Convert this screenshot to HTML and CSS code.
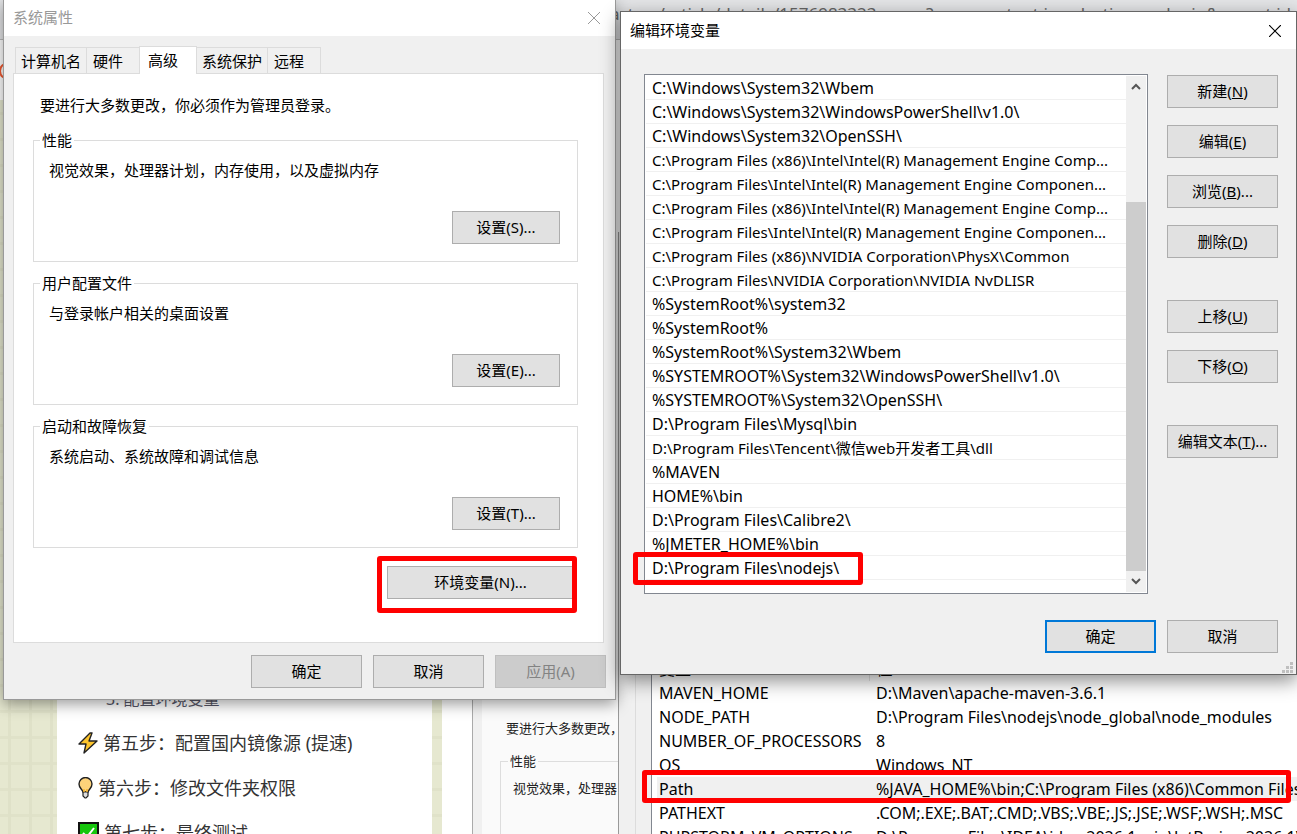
FILE: index.html
```html
<!DOCTYPE html>
<html lang="zh-CN">
<head>
<meta charset="UTF-8">
<meta name="viewport" content="width=device-width, initial-scale=1.0">
<title>编辑环境变量</title>
<link rel="stylesheet" href="styles.css">
</head>
<body>

<main class="desktop">

  <!-- Browser page behind the dialogs -->
  <div class="browser">
    <div class="address-bar">
      <span>aster</span>
      <span>/article/details/1576983323</span>
      <span class="query">?spm=content.in.selection_pe.login&amp;parent.id</span>
    </div>
    <div class="toolbar">
      <svg width="20" height="20" viewBox="0 0 20 20"><circle cx="10" cy="10" r="8" fill="none" stroke="#f05a32" stroke-width="2"/></svg>
    </div>
    <div class="page">
      <article class="article">
        <p class="step-sub">3. 配置环境变量</p>
        <p class="step">
          <svg width="20" height="22" viewBox="0 0 20 22"><path d="M12 1 1 12h7l-2 9 13-12h-8l3-8z" fill="#fcc42c" stroke="#222" stroke-width="1.4" stroke-linejoin="round"/></svg>
          第五步：配置国内镜像源 (提速)
        </p>
        <p class="step">
          <svg width="15" height="22" viewBox="0 0 15 22"><path d="M5 15C4 12 1 11 1 7a6.500 6.500 0 0 1 13 0c0 4-3 5-4 8z" fill="#fdd27a" stroke="#222" stroke-width="1.4"/><path d="M5 15v4l2 2h1l2-2v-4z" fill="#ddd" stroke="#222" stroke-width="1.2"/><path d="M6 15v-3M9 15v-3" stroke="#f5b32a" stroke-width="1.5"/></svg>
          第六步：修改文件夹权限
        </p>
        <p class="step">
          <svg width="21" height="22" viewBox="0 0 21 22"><rect x="1" y="1" width="19" height="20" fill="#16c60c" stroke="#111" stroke-width="2"/><path d="m5 11 4 4 7-9" fill="none" stroke="#fff" stroke-width="2"/></svg>
          第七步：最终测试
        </p>
      </article>
      <div class="preview">
        <div class="preview-panel">
          <p>要进行大多数更改，</p>
          <fieldset>
            <legend>性能</legend>
            视觉效果，处理器
          </fieldset>
        </div>
      </div>
    </div>
  </div>

  <!-- Environment variables window -->
  <section class="window env-window">
    <div class="env-group">
      <div class="env-list">
        <table>
          <thead>
            <tr><th>变量</th><th>值</th></tr>
          </thead>
          <tbody>
            <tr><td>MAVEN_HOME</td><td>D:\Maven\apache-maven-3.6.1</td></tr>
            <tr><td>NODE_PATH</td><td>D:\Program Files\nodejs\node_global\node_modules</td></tr>
            <tr><td>NUMBER_OF_PROCESSORS</td><td>8</td></tr>
            <tr><td>OS</td><td>Windows_NT</td></tr>
            <tr class="selected"><td>Path</td><td>%JAVA_HOME%\bin;C:\Program Files (x86)\Common Files\</td></tr>
            <tr><td>PATHEXT</td><td>.COM;.EXE;.BAT;.CMD;.VBS;.VBE;.JS;.JSE;.WSF;.WSH;.MSC</td></tr>
            <tr><td>PHPSTORM_VM_OPTIONS</td><td>D:\Program Files\IDEA\idea-2026.1-win\JetBrains-2026.1\</td></tr>
          </tbody>
        </table>
        <span class="mark mark-path"></span>
      </div>
    </div>
  </section>

  <!-- System properties -->
  <section class="window system-window">
    <header class="titlebar">
      <h2>系统属性</h2>
      <button class="close" aria-label="关闭"><svg width="12" height="12" viewBox="0 0 12 12"><path d="M0 0l12 12M12 0 0 12" stroke="currentColor" stroke-width="1"/></svg></button>
    </header>
    <div class="system-body">
      <nav class="tabs">
        <button class="tab">计算机名</button>
        <button class="tab tab-short">硬件</button>
        <button class="tab tab-short active">高级</button>
        <button class="tab">系统保护</button>
        <button class="tab tab-short">远程</button>
      </nav>
      <div class="panel">
        <p class="intro">要进行大多数更改，你必须作为管理员登录。</p>
        <fieldset class="group">
          <legend>性能</legend>
          <p>视觉效果，处理器计划，内存使用，以及虚拟内存</p>
          <button class="btn">设置(S)...</button>
        </fieldset>
        <fieldset class="group">
          <legend>用户配置文件</legend>
          <p>与登录帐户相关的桌面设置</p>
          <button class="btn">设置(E)...</button>
        </fieldset>
        <fieldset class="group">
          <legend>启动和故障恢复</legend>
          <p>系统启动、系统故障和调试信息</p>
          <button class="btn">设置(T)...</button>
        </fieldset>
        <div class="env-action">
          <button class="btn">环境变量(N)...</button>
          <span class="mark mark-env"></span>
        </div>
      </div>
      <footer class="actions">
        <button class="btn">确定</button>
        <button class="btn">取消</button>
        <button class="btn" disabled>应用(A)</button>
      </footer>
    </div>
  </section>

  <!-- Edit environment variable -->
  <section class="window edit-window">
    <header class="titlebar">
      <h2>编辑环境变量</h2>
      <button class="close" aria-label="关闭"><svg width="12" height="12" viewBox="0 0 12 12"><path d="M0 0l12 12M12 0 0 12" stroke="currentColor" stroke-width="1.200"/></svg></button>
    </header>
    <div class="edit-body">
      <div class="path-list">
        <ul>
          <li>C:\Windows\System32\Wbem</li>
          <li>C:\Windows\System32\WindowsPowerShell\v1.0\</li>
          <li>C:\Windows\System32\OpenSSH\</li>
          <li class="long">C:\Program Files (x86)\Intel\Intel(R) Management Engine Comp...</li>
          <li class="long">C:\Program Files\Intel\Intel(R) Management Engine Componen...</li>
          <li class="long">C:\Program Files (x86)\Intel\Intel(R) Management Engine Comp...</li>
          <li class="long">C:\Program Files\Intel\Intel(R) Management Engine Componen...</li>
          <li class="long">C:\Program Files (x86)\NVIDIA Corporation\PhysX\Common</li>
          <li class="long">C:\Program Files\NVIDIA Corporation\NVIDIA NvDLISR</li>
          <li>%SystemRoot%\system32</li>
          <li>%SystemRoot%</li>
          <li>%SystemRoot%\System32\Wbem</li>
          <li>%SYSTEMROOT%\System32\WindowsPowerShell\v1.0\</li>
          <li>%SYSTEMROOT%\System32\OpenSSH\</li>
          <li>D:\Program Files\Mysql\bin</li>
          <li class="long">D:\Program Files\Tencent\微信web开发者工具\dll</li>
          <li>%MAVEN</li>
          <li>HOME%\bin</li>
          <li>D:\Program Files\Calibre2\</li>
          <li>%JMETER_HOME%\bin</li>
          <li>D:\Program Files\nodejs\</li>
        </ul>
        <div class="scrollbar">
          <button class="arrow" aria-label="向上滚动"><svg width="10" height="7" viewBox="0 0 10 7"><path d="m1 6 4-4 4 4" fill="none" stroke="#555" stroke-width="2"/></svg></button>
          <div class="thumb"></div>
          <button class="arrow" aria-label="向下滚动"><svg width="10" height="7" viewBox="0 0 10 7"><path d="m1 1 4 4 4-4" fill="none" stroke="#555" stroke-width="2"/></svg></button>
        </div>
        <span class="mark mark-node"></span>
      </div>
      <div class="side">
        <div class="side-group">
          <button class="btn">新建(<u>N</u>)</button>
          <button class="btn">编辑(<u>E</u>)</button>
          <button class="btn">浏览(<u>B</u>)...</button>
          <button class="btn">删除(<u>D</u>)</button>
        </div>
        <div class="side-group">
          <button class="btn">上移(<u>U</u>)</button>
          <button class="btn">下移(<u>O</u>)</button>
        </div>
        <div class="side-group">
          <button class="btn">编辑文本(<u>T</u>)...</button>
        </div>
      </div>
    </div>
    <footer class="actions">
      <button class="btn primary">确定</button>
      <button class="btn">取消</button>
    </footer>
    <svg class="grip" width="11" height="11" viewBox="0 0 11 11" fill="#bfbfbf"><path d="M8 0h3v3H8zM4 4h3v3H4zM8 4h3v3H8zM0 8h3v3H0zM4 8h3v3H4zM8 8h3v3H8z"/></svg>
  </section>

</main>

</body>
</html>
```
FILE: styles.css
```css
* {
  box-sizing: border-box;
}

body {
  margin: 0;
  font-family: "Noto Sans", "Noto Sans CJK SC", sans-serif;
  font-size: 15px;
  line-height: 20px;
  color: #000;
}

h2, p, ul, fieldset {
  margin: 0;
  padding: 0;
}

button {
  font: inherit;
  color: inherit;
  padding: 0;
}

.desktop {
  position: relative;
  height: 100vh;
  overflow: hidden;
  background: #fff;
}

/* browser page */
.browser {
  display: flex;
  flex-direction: column;
  height: 100%;
}

.address-bar {
  flex-shrink: 0;
  display: flex;
  gap: 8px;
  height: 40px;
  padding: 4px 6px 0 610px;
  background: #e4e5e7;
  border-bottom: 1px solid #bbb;
  color: #666;
  font-size: 17px;
  line-height: 20px;
  white-space: nowrap;
}

.query {
  margin-left: auto;
}

.toolbar {
  flex-shrink: 0;
  height: 60px;
  padding-top: 21px;
}

.toolbar svg {
  display: block;
  margin-left: -2px;
}

.page {
  flex: 1;
  display: flex;
  min-height: 0;
  padding-left: 57px;
  background-color: #e6e8d0;
  background-image:
    repeating-linear-gradient(90deg, transparent 0 8px, #dfe1c8 8px 11px, transparent 11px 21px),
    repeating-linear-gradient(0deg, transparent 0 17px, #e0e2c9 17px 20px, transparent 20px 26px);
}

.article {
  width: 375px;
  padding: 587px 21px 0;
  background: #fff;
  color: #333;
}

.step-sub {
  padding-left: 28px;
  font-size: 16px;
  line-height: 24px;
  color: #556;
}

.step {
  display: flex;
  align-items: center;
  gap: 5px;
  margin-bottom: 21px;
  font-size: 18px;
  line-height: 24px;
  white-space: nowrap;
}

.step-sub + .step {
  margin-top: 20px;
}

.preview {
  flex: 1;
  margin-left: 10px;
  padding-left: 31px;
  background: #fff;
}

.preview-panel {
  height: 100%;
  padding: 618px 0 0 18px;
  border-left: 9px solid #f0f0f0;
  background: #fafafa;
  box-shadow: -1px 0 #aaa;
  color: #222;
  font-size: 13px;
  white-space: nowrap;
}

.preview-panel p {
  padding-left: 6px;
}

.preview fieldset {
  height: 120px;
  margin-top: 13px;
  padding: 7px 12px;
  border: 1px solid #ddd;
}

.preview legend {
  padding: 0 2px;
  margin-left: -5px;
}

/* windows */
.window {
  position: absolute;
  background: #f0f0f0;
}

.titlebar {
  display: flex;
  align-items: center;
  justify-content: space-between;
  height: 37px;
  padding: 0 15px 0 9px;
  background: #fff;
}

.titlebar h2 {
  padding-bottom: 2px;
  font-size: 15px;
  font-weight: normal;
}

.close {
  display: flex;
  border: none;
  background: none;
}

.btn {
  width: 111px;
  height: 33px;
  padding-bottom: 2px;
  border: 1px solid #adadad;
  background: #e1e1e1;
  text-align: center;
}

.btn:hover {
  border-color: #0078d7;
  background: #e5f1fb;
}

.btn:disabled {
  border-color: #bfbfbf;
  background: #ccc;
  color: #838383;
}

.primary {
  border: 2px solid #0078d7;
}

.actions {
  display: flex;
  justify-content: flex-end;
  gap: 11px;
}

/* red annotation frames */
.mark {
  position: absolute;
  border: 5px solid #f00;
  border-radius: 3px;
  pointer-events: none;
}

.mark-env {
  inset: -10px -3px -14px -10px;
}

.mark-node {
  left: -12px;
  bottom: 8px;
  width: 230px;
  height: 33px;
}

.mark-path {
  top: 114px;
  left: -10px;
  right: 6px;
  height: 33px;
}

/* environment variables */
.env-window {
  top: 232px;
  left: 618px;
  right: 0;
  bottom: 0;
  padding-left: 16px;
  border-left: 1px solid #999;
}

.env-group {
  height: 100%;
  padding: 424px 0 0 15px;
  border-left: 1px solid #dcdcdc;
}

.env-list {
  position: relative;
  height: 100%;
  border-left: 1px solid #828790;
  background: #fff;
  font-size: 16px;
}

.env-list table {
  width: 100%;
  table-layout: fixed;
  border-collapse: collapse;
}

.env-list th,
.env-list td {
  height: 24px;
  padding: 0 0 0 7px;
  font-weight: normal;
  text-align: left;
  white-space: nowrap;
}

.env-list th {
  height: 25px;
}

.env-list th:first-child {
  width: 217px;
  border-right: 1px solid #e5e5e5;
}

.env-list .selected {
  background: linear-gradient(#f0f0f0, #f0f0f0) 5px 0 no-repeat;
}

/* system properties */
.system-window {
  top: 0;
  left: 3px;
  width: 613px;
  border: solid #999;
  border-width: 0 1px 1px;
  box-shadow: 0 4px 14px rgba(0, 0, 0, 0.4);
}

.system-window .titlebar {
  height: 36px;
  color: #999;
}

.system-body {
  padding: 10px 9px 11px;
}

.system-body .actions {
  margin-top: 12px;
}

.tabs {
  display: flex;
  align-items: flex-end;
  padding-left: 2px;
}

.tab {
  width: 72px;
  height: 26px;
  margin-right: -1px;
  border: 1px solid #dcdcdc;
  border-bottom: none;
  background: #f0f0f0;
  white-space: nowrap;
}

.tab-short {
  width: 54px;
  padding-right: 10px;
}

.tab.active {
  z-index: 1;
  width: 58px;
  height: 28px;
  margin-bottom: -1px;
  padding-bottom: 2px;
  background: #fff;
}

.panel {
  margin-right: 2px;
  padding: 21px 25px 43px 19px;
  border: 1px solid #dcdcdc;
  background: #fff;
}

.intro {
  padding-left: 7px;
}

.group {
  display: flex;
  flex-direction: column;
  justify-content: space-between;
  height: 132px;
  margin-top: 15px;
  padding: 10px 17px 17px 15px;
  border: 1px solid #dcdcdc;
}

.group + .group {
  margin-top: 11px;
}

.group legend {
  margin-left: -9px;
  padding: 0 2px;
}

.group .btn {
  align-self: flex-end;
  width: 108px;
}

.env-action {
  position: relative;
  width: 187px;
  margin: 18px 4px 0 auto;
}

.env-action .btn {
  width: 100%;
}

/* edit dialog */
.edit-window {
  top: 11px;
  left: 620px;
  right: 0;
  border: 1px solid #666;
  box-shadow: 0 6px 18px rgba(0, 0, 0, 0.45);
}

.edit-body {
  display: flex;
  gap: 19px;
  padding: 25px 18px 26px 23px;
}

.path-list {
  position: relative;
  flex: 1;
  display: flex;
  min-width: 0;
  height: 520px;
  padding: 1px;
  border: 1px solid #828790;
  background: #fff;
}

.path-list ul {
  flex: 1;
  min-width: 0;
  list-style: none;
}

.path-list li {
  height: 24px;
  padding: 0 6px;
  border-bottom: 1px solid #f0f0f0;
  font-size: 16px;
  line-height: 24px;
  white-space: nowrap;
}

.path-list .long {
  font-size: 15px;
}

.scrollbar {
  display: flex;
  flex-direction: column;
  justify-content: flex-end;
  width: 20px;
  background: #f0f0f0;
}

.arrow {
  display: flex;
  align-items: center;
  justify-content: center;
  height: 21px;
  border: none;
  background: none;
}

.arrow:first-child {
  margin-bottom: auto;
}

.thumb {
  height: 369px;
  background: #cdcdcd;
}

.side {
  display: flex;
  flex-direction: column;
  gap: 42px;
  padding-top: 1px;
}

.side-group {
  display: flex;
  flex-direction: column;
  gap: 17px;
}

.edit-window .actions {
  padding: 0 18px 21px;
}

.grip {
  position: absolute;
  right: 3px;
  bottom: 1px;
}
```
